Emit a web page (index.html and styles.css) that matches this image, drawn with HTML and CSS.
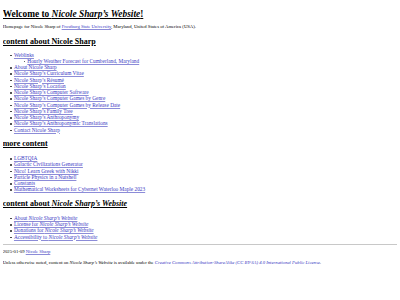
FILE: index.html
```html
<!DOCTYPE html>
<html lang="en">
<head>
  <meta charset="UTF-8" />
  <title>Nicole Sharp's Website</title>
  <meta name="viewport" content="width=device-width, initial-scale=1.0" />
  <link rel="stylesheet" href="styles.css">
</head>
<body>

  <h1>Welcome to <i>Nicole Sharp’s Website</i>!</h1>
  <p class="intro">Homepage for Nicole Sharp of <a href="#">Frostburg State University</a>, Maryland, United States of America (USA).</p>

  <h2 class="first">content about Nicole Sharp</h2>
  <ul>
    <li><a href="#">Weblinks</a>
      <ul>
        <li><a href="#">Hourly Weather Forecast for Cumberland, Maryland</a></li>
      </ul>
    </li>
    <li><a href="#">About Nicole Sharp</a></li>
    <li><a href="#">Nicole Sharp’s Curriculum Vitae</a></li>
    <li><a href="#">Nicole Sharp’s Résumé</a></li>
    <li><a href="#">Nicole Sharp’s Location</a></li>
    <li><a href="#">Nicole Sharp’s Computer Software</a></li>
    <li><a href="#">Nicole Sharp’s Computer Games by Genre</a></li>
    <li><a href="#">Nicole Sharp’s Computer Games by Release Date</a></li>
    <li><a href="#">Nicole Sharp’s Family Tree</a></li>
    <li><a href="#">Nicole Sharp’s Anthroponymy</a></li>
    <li><a href="#">Nicole Sharp’s Anthroponymic Translations</a></li>
    <li><a href="#">Contact Nicole Sharp</a></li>
  </ul>

  <h2>more content</h2>
  <ul>
    <li><a href="#">LGBTQIA</a></li>
    <li><a href="#">Galactic Civilizations Generator</a></li>
    <li><a href="#">Nico! Learn Greek with Nikki</a></li>
    <li><a href="#">Particle Physics in a Nutshell</a></li>
    <li><a href="#">Constants</a></li>
    <li><a href="#">Mathematical Worksheets for Cybernet Waterloo Maple 2023</a></li>
  </ul>

  <h2>content about <i>Nicole Sharp’s Website</i></h2>
  <ul class="last">
    <li><a href="#">About <i>Nicole Sharp’s Website</i></a></li>
    <li><a href="#">License for <i>Nicole Sharp’s Website</i></a></li>
    <li><a href="#">Donations for <i>Nicole Sharp’s Website</i></a></li>
    <li><a href="#">Accessibility to <i>Nicole Sharp’s Website</i></a></li>
  </ul>

  <hr>

  <p class="date">2025-01-09 <a href="#">Nicole Sharp</a></p>
  <p class="license">Unless otherwise noted, content on <i>Nicole Sharp’s Website</i> is available under the <a href="#"><i>Creative Commons Attribution-ShareAlike (CC BY-SA) 4.0 International Public License</i></a>.</p>

</body>
</html>
```

FILE: styles.css
```css
body {
  margin: 2.67px;
  font-family: 'Liberation Serif', 'Times New Roman', serif;
  font-size: 5.33px;
  color: #000;
  background: #fff;
}

h1 {
  font-size: 9.4px;
  margin: 6.4px 0 5px;
  text-decoration: underline;
}

h2 {
  font-size: 8px;
  margin: 6.64px 0;
  text-decoration: underline;
}

/* first heading sits a bit lower under the intro */
h2.first {
  margin: 8px 0 5.5px;
}

p {
  font-size: 4.7px;
  margin: 5px 0;
}

ul {
  margin: 5.33px 0;
  padding-left: 11.3px;
  line-height: 6.25px;
  list-style: none;
}

ul ul {
  margin: 0;
  padding-left: 13.33px;
}

ul.last {
  margin-bottom: 4.67px;
}

li::before {
  content: "";
  display: inline-block;
  width: 1.6px;
  height: 1.6px;
  margin-left: -3.6px;
  margin-right: 2px;
  border-radius: 50%;
  background: #333;
  vertical-align: middle;
}

a {
  color: #3a3ac4;
  text-decoration-color: #8c8cd8;
}

hr {
  margin: 0;
  border: 0;
  border-top: 1px solid #c8c8c8;
}

.date {
  margin: 3.3px 0 5.9px;
}

.license {
  margin: 0;
}
```
